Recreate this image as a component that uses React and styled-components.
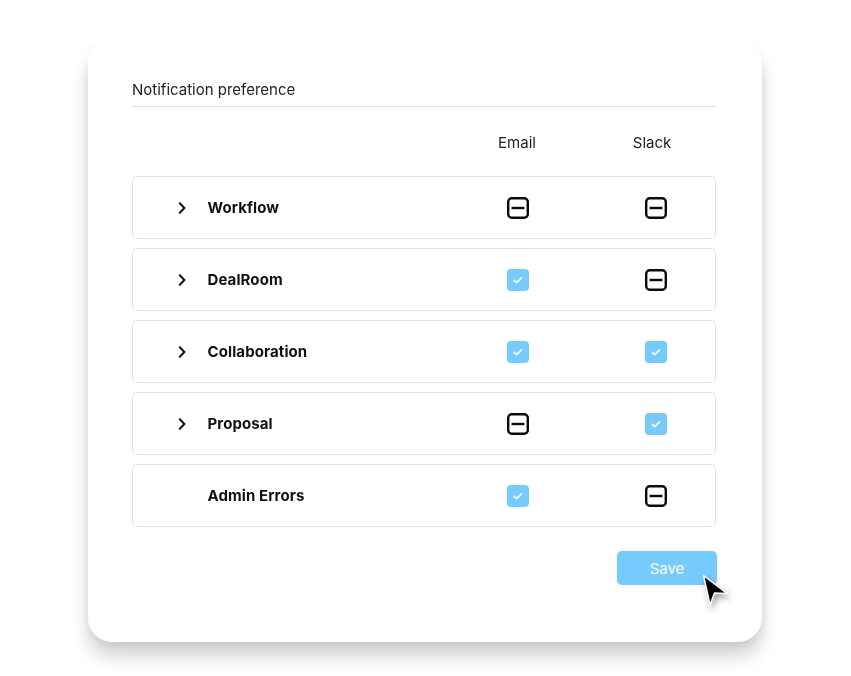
import React from "react";
import styled, { createGlobalStyle } from "styled-components";

const Global = createGlobalStyle`
  html, body { margin: 0; padding: 0; background: #ffffff; }
  body { font-family: "Inter", "Noto Sans", "Liberation Sans", sans-serif; color: #1c1c1c; }
`;

const Page = styled.div`
  width: 851px;
  height: 676px;
  overflow: hidden;
  display: flex;
  justify-content: flex-start;
  padding: 40px 0 0 88px;
  box-sizing: border-box;
  -webkit-mask-image: linear-gradient(to bottom, rgba(0,0,0,0) 10px, rgba(0,0,0,0.5) 45px, #000 80px);
  mask-image: linear-gradient(to bottom, rgba(0,0,0,0) 10px, rgba(0,0,0,0.5) 45px, #000 80px);
`;

const Card = styled.section`
  width: 674px;
  height: 602px;
  box-sizing: border-box;
  background: #ffffff;
  border-radius: 24px;
  box-shadow: 0 14px 18px rgba(0, 0, 0, 0.18), 0 2px 10px rgba(0, 0, 0, 0.07);
  padding: 40px 46px 0 44px;
  display: flex;
  flex-direction: column;
`;

const Title = styled.h2`
  margin: 0;
  font-size: 15px;
  line-height: 20px;
  font-weight: 400;
  color: #1e1e1e;
  padding-bottom: 6px;
  border-bottom: 1px solid #dedede;
`;

const HeaderRow = styled.div`
  display: flex;
  align-items: center;
  margin-top: 26px;
  margin-bottom: 23px;
  height: 20px;
`;

const Spacer = styled.div`
  flex: 1;
`;

const Cells = styled.div`
  display: flex;
  gap: ${(p) => p.$gap}px;
  margin-right: ${(p) => p.$right}px;
`;

const HeaderCell = styled.div`
  width: 22px;
  display: flex;
  justify-content: center;
  white-space: nowrap;
  font-size: 15px;
  line-height: 20px;
  color: #1e1e1e;
`;

const List = styled.div`
  display: flex;
  flex-direction: column;
  gap: 9px;
`;

const Row = styled.div`
  height: 63px;
  box-sizing: border-box;
  border: 1.5px solid #e2e2e2;
  border-radius: 6px;
  display: flex;
  align-items: center;
  padding-left: 44.5px;
`;

const Chevron = styled.div`
  width: 8px;
  height: 12px;
  margin-right: 22px;
  display: flex;
  color: #111;
`;

const Label = styled.div`
  flex: 1;
  font-size: 15px;
  font-weight: 700;
  color: #111;
  letter-spacing: 0.1px;
`;

const Box = styled.div`
  width: 22px;
  height: 22px;
  display: flex;
`;

const Footer = styled.div`
  display: flex;
  justify-content: flex-end;
  margin-top: 24px;
`;

const SaveButton = styled.button`
  position: relative;
  width: 100px;
  height: 34px;
  border: none;
  border-radius: 5px;
  background: #73cbff;
  color: #ffffff;
  font-family: "Inter", "Noto Sans", "Liberation Sans", sans-serif;
  font-size: 15px;
  font-weight: 400;
  margin-right: -1px;
  padding: 0;
  cursor: pointer;
`;

const Cursor = styled.svg`
  position: absolute;
  left: 85px;
  top: 23px;
  overflow: visible;
  filter: drop-shadow(2px 4px 3px rgba(0, 0, 0, 0.35));
`;

const ChevronIcon = () => (
  <svg width="8" height="12" viewBox="0 0 8 12">
    <path d="M1.8 1.2 L6.4 6 L1.8 10.8" fill="none" stroke="currentColor" strokeWidth="2" strokeLinecap="round" strokeLinejoin="round" />
  </svg>
);

const Checked = () => (
  <svg width="22" height="22" viewBox="0 0 22 22">
    <rect x="0" y="0" width="22" height="22" rx="4" fill="#73cbff" />
    <path d="M7.3 11.4 L9.7 13.7 L14.6 8.8" fill="none" stroke="#ffffff" strokeWidth="1.7" strokeLinecap="round" strokeLinejoin="round" />
  </svg>
);

const Partial = () => (
  <svg width="22" height="22" viewBox="0 0 22 22">
    <rect x="1.2" y="1.2" width="19.6" height="19.6" rx="3.6" fill="none" stroke="#0a0a0a" strokeWidth="2.4" />
    <path d="M4.6 11 L17.4 11" stroke="#0a0a0a" strokeWidth="2.4" />
  </svg>
);

const rows = [
  { name: "Workflow", expandable: true, email: false, slack: false },
  { name: "DealRoom", expandable: true, email: true, slack: false },
  { name: "Collaboration", expandable: true, email: true, slack: true },
  { name: "Proposal", expandable: true, email: false, slack: true },
  { name: "Admin Errors", expandable: false, email: true, slack: false },
];

export default function App() {
  return (
    <>
      <Global />
      <Page>
        <Card>
          <Title>Notification preference</Title>
          <HeaderRow>
            <Spacer />
            <Cells $gap={116} $right={50}>
              <HeaderCell>Email</HeaderCell>
              <HeaderCell style={{ transform: "translateX(-3px)" }}>Slack</HeaderCell>
            </Cells>
          </HeaderRow>
          <List>
            {rows.map((r) => (
              <Row key={r.name}>
                <Chevron>{r.expandable ? <ChevronIcon /> : null}</Chevron>
                <Label>{r.name}</Label>
                <Cells $gap={116} $right={48.5}>
                  <Box>{r.email ? <Checked /> : <Partial />}</Box>
                  <Box>{r.slack ? <Checked /> : <Partial />}</Box>
                </Cells>
              </Row>
            ))}
          </List>
          <Footer>
            <SaveButton>
              Save
              <Cursor width="26" height="32" viewBox="0 0 26 32">
                <path d="M1.5 1.5 L8 31 L12.5 19 L25 19.5 Z" fill="#000" stroke="#fff" strokeWidth="1.5" strokeLinejoin="round" />
              </Cursor>
            </SaveButton>
          </Footer>
        </Card>
      </Page>
    </>
  );
}
